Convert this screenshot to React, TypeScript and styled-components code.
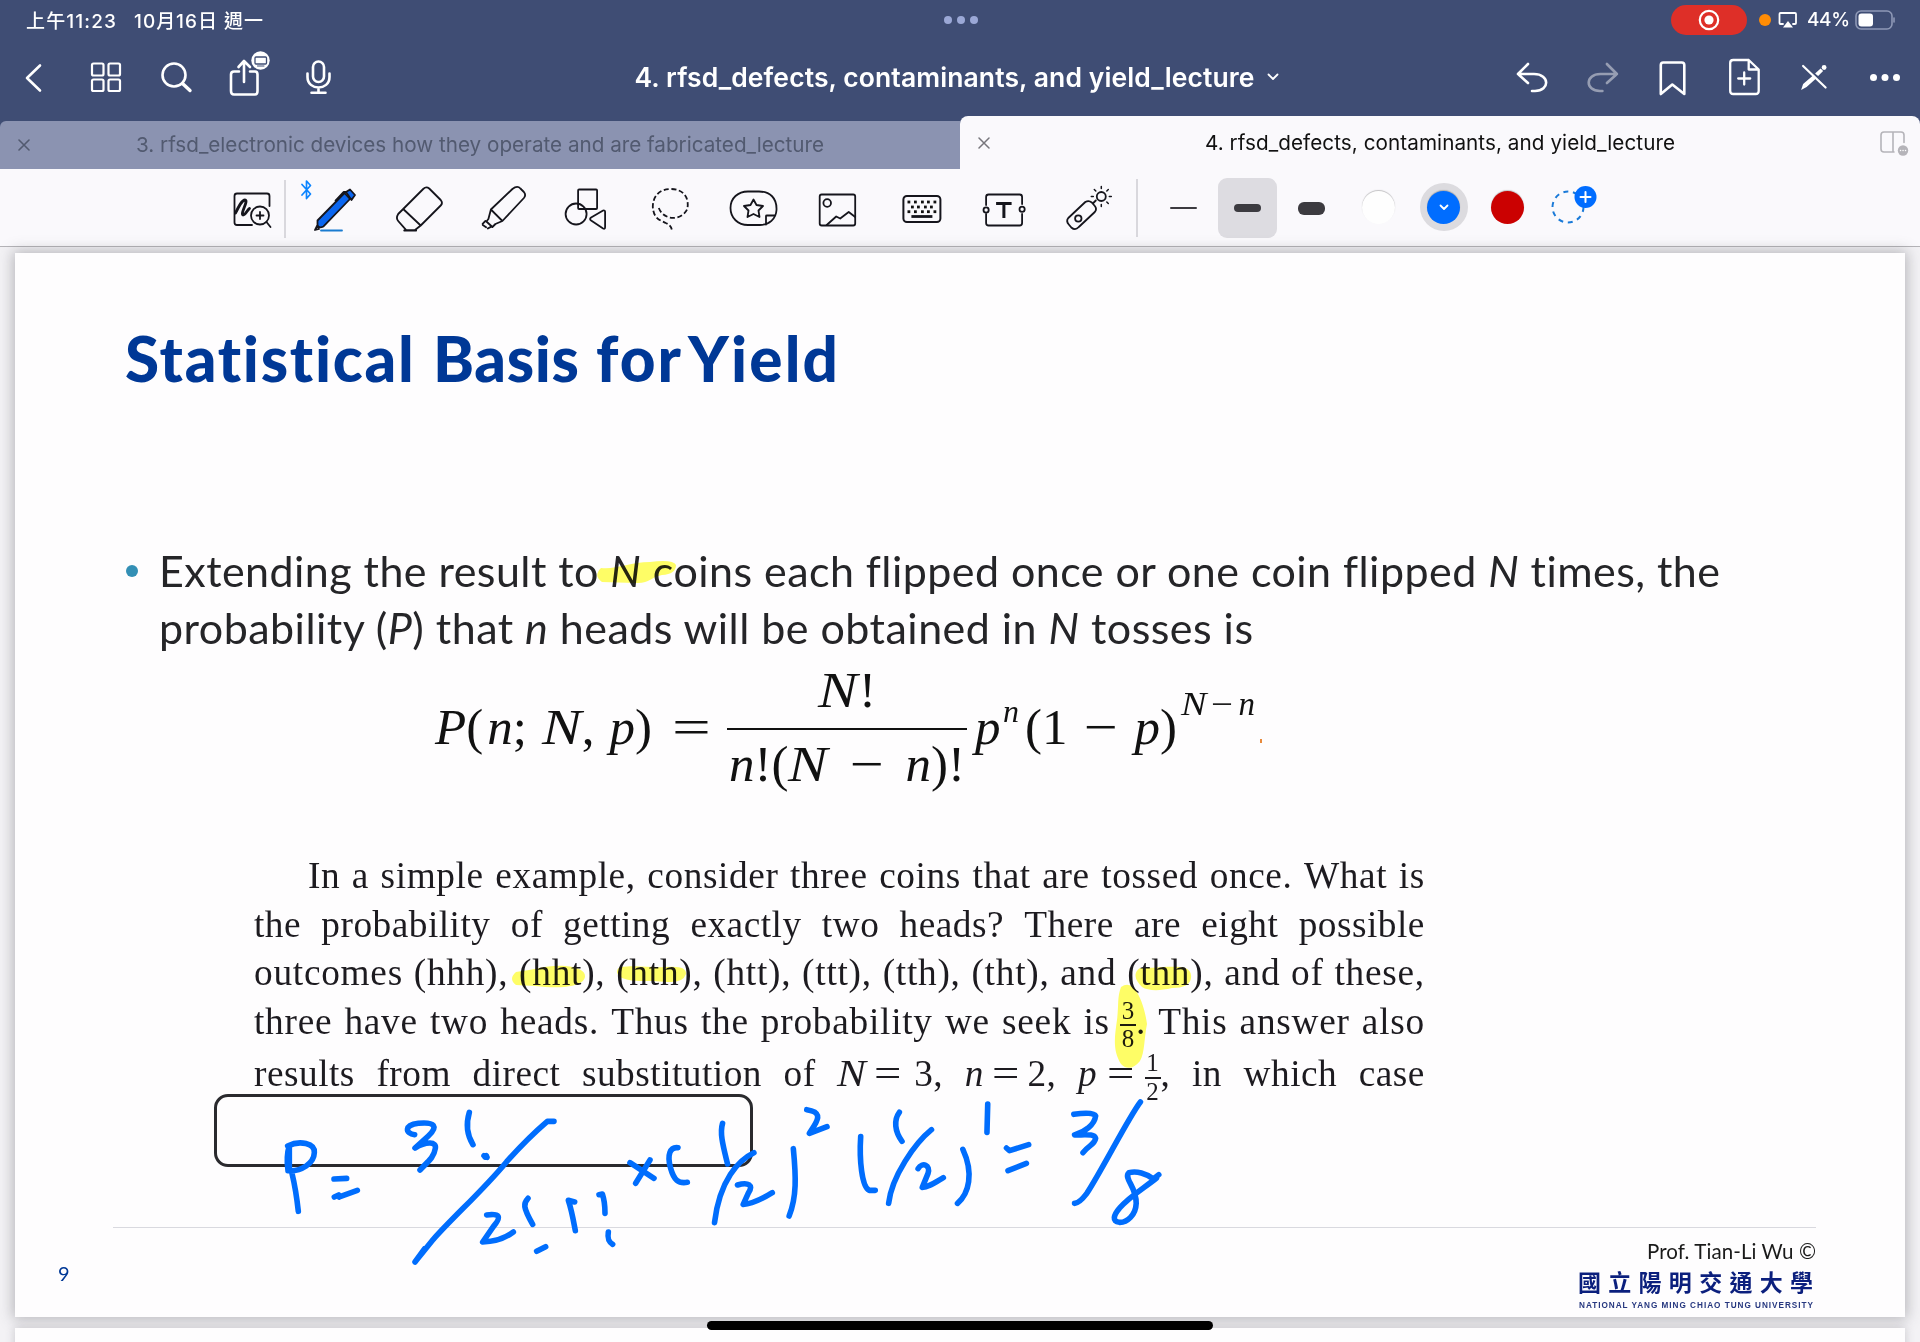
import React, { useLayoutEffect, useRef } from 'react';
import styled, { createGlobalStyle } from 'styled-components';

const ui = `Inter, "Noto Sans CJK TC", sans-serif`;
const gill = `Lato, "Open Sans", sans-serif`;
const book = `"Liberation Serif", serif`;

const Global = createGlobalStyle`
  * { box-sizing: border-box; }
  body { margin: 0; background: #f3f2f5; font-family: ${ui}; overflow: hidden; }
`;

const Screen = styled.div`
  width: 1920px;
  height: 1342px;
  overflow: hidden;
  display: flex;
  flex-direction: column;
  position: relative;
`;

/* One line of text tracked so that it spans a given width. */
const FitSpan = styled.span<{ $w: number }>`
  display: inline-block;
  width: ${p => p.$w}px;
  white-space: nowrap;
`;

function Fit({ w, children }: { w: number; children: React.ReactNode }) {
  const ref = useRef<HTMLSpanElement>(null);
  useLayoutEffect(() => {
    const el = ref.current;
    if (!el) return;
    el.style.letterSpacing = '0px';
    const range = document.createRange();
    range.selectNodeContents(el);
    const natural = range.getBoundingClientRect().width;
    const n = (el.textContent || '').length;
    el.style.letterSpacing = `${(w - natural) / Math.max(1, n - 1)}px`;
  }, [w]);
  return <FitSpan ref={ref} $w={w}>{children}</FitSpan>;
}

/* ---------- header ---------- */
const Header = styled.header`
  flex: none;
  height: 169px;
  background: #3f4d74;
  color: #fff;
  display: flex;
  flex-direction: column;
`;
const StatusBar = styled.div`
  height: 39px;
  display: grid;
  grid-template-columns: 1fr auto 1fr;
  align-items: center;
  padding: 0 25px 0 26px;
  font-size: 19px;
  font-weight: 500;
`;
const StatusLeft = styled.div`
  display: flex;
  gap: 18px;
`;
const StatusRight = styled.div`
  display: flex;
  align-items: center;
  justify-content: flex-end;
`;
const Dots = styled.div`
  display: flex;
  gap: 5px;
  i { width: 8px; height: 8px; border-radius: 50%; background: #9ba8d6; }
`;
const RecordPill = styled.div`
  width: 76px;
  height: 30px;
  border-radius: 15px;
  background: #de2f28;
  display: flex;
  align-items: center;
  justify-content: center;
  margin-right: 12px;
`;
const MicDot = styled.i`
  width: 12px;
  height: 12px;
  border-radius: 50%;
  background: #ff8c05;
  margin-right: 7px;
`;
const BatteryText = styled.span`
  margin: 0 1px 0 9px;
`;
const Nav = styled.div`
  height: 77px;
  display: grid;
  grid-template-columns: 1fr auto 1fr;
  padding: 0 5px 0 4px;
`;
const NavGroup = styled.div<{ $gap: number; $end?: boolean }>`
  display: flex;
  gap: ${p => p.$gap}px;
  justify-content: ${p => (p.$end ? 'flex-end' : 'flex-start')};
`;
const NavTitle = styled.div`
  display: flex;
  align-items: center;
  gap: 12px;
  padding: 0 6px 2px 0;
  font-size: 26.5px;
  font-weight: 600;
`;
const Icon = styled.svg`
  display: block;
  flex: none;
  fill: none;
  stroke: currentColor;
  stroke-width: 2.6;
  stroke-linecap: round;
  stroke-linejoin: round;
`;

const Tabs = styled.div`
  flex: 1;
  display: grid;
  grid-template-columns: 1fr 1fr;
  align-items: end;
`;
const Tab = styled.div<{ $active?: boolean }>`
  height: ${p => (p.$active ? 53 : 48)}px;
  padding: 0 14px 0 18px;
  border-radius: ${p => (p.$active ? '8px 8px 0 0' : '6px 0 0 0')};
  background: ${p => (p.$active ? '#faf9fc' : '#8b93b1')};
  color: ${p => (p.$active ? '#111' : '#525a70')};
  font-size: 20.7px;
  display: grid;
  grid-template-columns: 12px 1fr 26px;
  align-items: center;
`;
const TabLabel = styled.div<{ $shift: number; $up: number }>`
  padding-left: ${p => p.$shift}px;
  padding-bottom: ${p => p.$up}px;
`;

/* ---------- toolbar ---------- */
const Toolbar = styled.div`
  flex: none;
  height: 78px;
  background: #faf9fc;
  border-bottom: 1px solid #b5b4b8;
  display: flex;
  align-items: flex-start;
  padding-left: 210px;
`;
const ToolIcon = styled(Icon)`
  stroke: #15151c;
  stroke-width: 1.8;
`;
const Divider = styled.div<{ $mt: number; $ml?: number; $mr?: number }>`
  flex: none;
  width: 2px;
  height: 58px;
  margin: ${p => p.$mt}px ${p => p.$mr ?? 0}px 0 ${p => p.$ml ?? 0}px;
  background: #d9d8dd;
`;
const StrokeButton = styled.div<{ $on?: boolean; $ml: number }>`
  width: 59px;
  height: 60px;
  margin: 9px 0 0 ${p => p.$ml}px;
  border-radius: 9px;
  background: ${p => (p.$on ? '#dddce1' : 'transparent')};
  display: flex;
  align-items: center;
  justify-content: center;
`;
const StrokeSample = styled.i<{ $h: number }>`
  width: 27px;
  height: ${p => p.$h}px;
  border-radius: 6px;
  background: #3c3b40;
`;
const Swatch = styled.div<{ $c: string; $ring?: boolean; $ml: number }>`
  width: 48px;
  height: 48px;
  border-radius: 50%;
  margin: 14px 0 0 ${p => p.$ml}px;
  background: ${p => (p.$ring ? '#dcdbdf' : 'transparent')};
  display: flex;
  align-items: center;
  justify-content: center;
  > div {
    width: 33px;
    height: 33px;
    border-radius: 50%;
    background: ${p => p.$c};
    box-shadow: 0 -1px 1px rgba(0, 0, 0, 0.22);
    display: flex;
    align-items: center;
    justify-content: center;
  }
`;
const AddColor = styled(Icon)`
  margin-left: 8px;
`;

/* ---------- canvas ---------- */
const Canvas = styled.main`
  flex: 1;
  background: #f3f2f5;
  padding: 6px 15px 0;
  display: flex;
  flex-direction: column;
  gap: 11px;
`;
const Slide = styled.section`
  flex: none;
  height: 1064px;
  background: #fefdfe;
  box-shadow: 0 0 13px 2px rgba(70, 68, 78, 0.35);
  position: relative;
  padding: 70px 89px 0 96px;
  display: flex;
  flex-direction: column;
`;
const NextSlide = styled(Slide)`
  height: 100px;
  box-shadow: 0 0 9px rgba(70, 68, 78, 0.25);
`;
const SlideTitle = styled.h1`
  margin: 0 0 148.5px;
  padding-left: 14px;
  height: 70px;
  font: 900 62px/70px ${gill};
  color: #003896;
  display: flex;
`;
const TitleWord = styled.span<{ $ml: number }>`
  margin-left: ${p => p.$ml}px;
`;
const Bullet = styled.div`
  display: grid;
  grid-template-columns: 33px 1fr;
  padding-left: 15px;
  font: 400 43px/57px ${gill};
  color: #252528;
  &::before {
    content: '';
    width: 12px;
    height: 12px;
    margin-top: 23px;
    border-radius: 50%;
    background: #338fb5;
  }
`;
const BulletLine = styled.div`
  height: 57px;
`;
const Formula = styled.div`
  height: 195px;
  margin-top: 1px;
  padding-left: 324px;
  display: flex;
  align-items: flex-start;
  font: italic 51px/60px ${book};
  color: #111;
`;
const Term = styled.div<{ $w: number; $ml?: number; $mt?: number; $size?: number }>`
  width: ${p => p.$w}px;
  margin: ${p => p.$mt ?? 40}px 0 0 ${p => p.$ml ?? 0}px;
  font-size: ${p => p.$size ?? 51}px;
  line-height: ${p => (p.$size ? '34px' : '60px')};
  display: flex;
  justify-content: space-between;
  flex: none;
  b { font-weight: 400; font-style: normal; }
`;
const Spaced = styled.span<{ $gap: number }>`
  display: inline-flex;
  gap: ${p => p.$gap}px;
`;
const Wide = styled.span<{ $by: number; $extra: number }>`
  display: inline-block;
  font-style: ${p => (p.$by > 1.17 ? 'normal' : 'italic')};
  transform: scaleX(${p => p.$by});
  transform-origin: left;
  margin-right: ${p => p.$extra}px;
`;
const Fraction = styled.div`
  width: 240px;
  margin-left: 17px;
  padding-top: 3px;
  display: flex;
  flex-direction: column;
  align-items: center;
  flex: none;
`;
const FractionBar = styled.div`
  width: 240px;
  height: 2px;
  margin: 8.5px 0 3.5px;
  background: #111;
`;
const Period = styled.i`
  width: 2px;
  height: 4px;
  margin: 82px 0 0 5px;
  background: #e88a3c;
`;

const Passage = styled.div`
  width: 1171px;
  margin-top: 0.5px;
  margin-left: 143px;
  font: 400 37.3px/48.5px ${book};
  color: #1d1b20;
`;
const Line = styled.div<{ $indent?: number; $gap?: number; $track?: number }>`
  display: flex;
  justify-content: space-between;
  height: 48.5px;
  white-space: nowrap;
  letter-spacing: ${p => p.$track ?? 0.5}px;
  padding-left: ${p => p.$indent ?? 0}px;
  margin-top: ${p => p.$gap ?? 0}px;
`;
const Token = styled.span<{ $gap?: number; $pull?: number }>`
  display: inline-flex;
  gap: ${p => p.$gap ?? 0}px;
  margin-left: ${p => -(p.$pull ?? 0)}px;
`;
const SmallFraction = styled.span`
  width: 16px;
  display: inline-flex;
  flex-direction: column;
  align-items: center;
  font-size: 25px;
  line-height: 26.5px;
  letter-spacing: 0;
  span:first-child { border-bottom: 2px solid #1d1b20; width: 16px; text-align: center; }
`;
const AnswerBox = styled.div`
  width: 539px;
  height: 73px;
  margin: -4.5px 0 0 103px;
  border: 3.5px solid #2a2a2e;
  border-radius: 14px;
`;
const Rule = styled.div`
  height: 1px;
  margin-top: 60px;
  margin-left: 2px;
  background: #d9d9df;
  flex: none;
`;
const Footer = styled.footer`
  display: flex;
  justify-content: space-between;
  margin-left: -53px;
  padding-top: 11px;
`;
const PageNumber = styled.div`
  padding-top: 21px;
  font: 400 20px/26px ${gill};
  color: #003896;
`;
const Credit = styled.div`
  display: flex;
  flex-direction: column;
  align-items: flex-end;
  font: 400 20.5px/24px ${gill};
  color: #1a1a1a;
`;
const School = styled.div`
  margin: 4px 3px 0 0;
  font: 700 23px/28px "Noto Sans CJK TC", sans-serif;
  color: #0b1f7d;
`;
const SchoolEn = styled.div`
  margin: 4px 3px 0 0;
  font: 700 8.2px/14px "Liberation Sans", sans-serif;
  color: #26377f;
`;
const Ink = styled.svg`
  position: absolute;
  left: 0;
  top: 0;
  width: 1890px;
  height: 1064px;
  fill: none;
  stroke: #006dfd;
  stroke-width: 5.6;
  stroke-linecap: round;
  stroke-linejoin: round;
  path { vector-effect: non-scaling-stroke; }
`;
const Marker = styled(Ink)`
  mix-blend-mode: multiply;
  fill: #ffff66;
  stroke: none;
`;
const HomeBar = styled.div`
  position: absolute;
  left: 707px;
  top: 1321px;
  width: 506px;
  height: 9px;
  border-radius: 5px;
  background: #000;
`;

const Words = ({ text }: { text: string }) => (
  <>{text.split(' ').map((w, i) => <span key={i}>{w}</span>)}</>
);
const BigN = ({ extra = 6 }: { extra?: number }) => <Wide $by={1.16} $extra={extra}>N</Wide>;
const Minus = ({ extra = 5 }: { extra?: number }) => <Wide $by={1.18} $extra={extra}>−</Wide>;

const NavIcon = ({ x, children, dim }: { x: number; children: React.ReactNode; dim?: boolean }) => (
  <Icon width={60} height={77} viewBox={`${x} 39 60 77`} opacity={dim ? 0.45 : 1}>{children}</Icon>
);
const Tool = ({ x, children }: { x: number; children: React.ReactNode }) => (
  <ToolIcon width={83.8} height={77} viewBox={`${x} 169 83.8 77`}>{children}</ToolIcon>
);

const keyRows = [
  { y: 202, xs: [908.5, 915, 922, 928, 934.5] },
  { y: 207, xs: [912, 918, 925, 931] },
  { y: 211.7, xs: [908.5, 915, 922, 928, 934.5] },
];

export default function App() {
  return (
    <Screen>
      <Global />
      <Header>
        <StatusBar>
          <StatusLeft>
            <Fit w={90}>上午11:23</Fit>
            <Fit w={129}>10月16日 週一</Fit>
          </StatusLeft>
          <Dots><i /><i /><i /></Dots>
          <StatusRight>
            <RecordPill>
              <Icon width={22} height={22} viewBox="0 0 22 22">
                <circle cx="11" cy="11" r="9.2" strokeWidth="2.2" />
                <circle cx="11" cy="11" r="4.6" fill="#fff" stroke="none" />
              </Icon>
            </RecordPill>
            <MicDot />
            <Icon width={20} height={18} viewBox="0 0 20 18">
              <path d="M5 13H2.500Q1.500 13 1.500 12V3Q1.500 2 2.500 2H17Q18 2 18 3V12Q18 13 17 13H15" strokeWidth="1.800" />
              <path d="M10 10L15 16.500H5Z" fill="#fff" stroke="none" />
            </Icon>
            <BatteryText><Fit w={43}>44%</Fit></BatteryText>
            <Icon width={44} height={22} viewBox="0 0 44 22">
              <rect x="5" y="2" width="36" height="18" rx="5" stroke="#8e98b6" strokeWidth="1.600" />
              <rect x="7.500" y="4.500" width="14.500" height="13" rx="3" fill="#fff" stroke="none" />
              <path d="M43 9V13" stroke="#8e98b6" strokeWidth="1.600" />
            </Icon>
          </StatusRight>
        </StatusBar>
        <Nav>
          <NavGroup $gap={11}>
            <NavIcon x={4}><path d="M40 65.500L27 78L40 90.500" /></NavIcon>
            <NavIcon x={75}>
              <rect x="92" y="63.500" width="11.500" height="12" rx="1.500" strokeWidth="2.200" />
              <rect x="108.500" y="63.500" width="11.500" height="12" rx="1.500" strokeWidth="2.200" />
              <rect x="92" y="79.500" width="11.500" height="11.500" rx="1.500" strokeWidth="2.200" />
              <rect x="108.500" y="79.500" width="11.500" height="11.500" rx="1.500" strokeWidth="2.200" />
            </NavIcon>
            <NavIcon x={146}>
              <circle cx="174" cy="75" r="11.500" />
              <path d="M182.500 83.500L190 90.500" strokeWidth="3.400" />
            </NavIcon>
            <NavIcon x={217}>
              <path d="M239 71.500H234Q231 71.500 231 74.500V91Q231 94.500 234 94.500H255Q257.500 94.500 257.500 91V74.500Q257.500 71.500 255 71.500H250" />
              <path d="M244 82V61M238.500 67L244 61L250 67" />
              <circle cx="260.500" cy="60.500" r="9.200" fill="#fff" stroke="none" />
              <rect x="255" y="57" width="11.500" height="7" rx="1" stroke="#3f4d74" strokeWidth="1.300" />
              <path d="M257.500 66H264" stroke="#3f4d74" strokeWidth="1" />
            </NavIcon>
            <NavIcon x={288}>
              <rect x="313" y="61.500" width="11" height="20.500" rx="5.500" />
              <path d="M307.500 73.500V77C307.500 91 329.500 91 329.500 77V73.500M318.500 88V92.500M311.500 92.700H325.500" />
            </NavIcon>
          </NavGroup>
          <NavTitle>
            <Fit w={620}>4. rfsd_defects, contaminants, and yield_lecture</Fit>
            <Icon width={12} height={8} viewBox="0 0 12 8"><path d="M1.500 1.500L6 6L10.500 1.500" strokeWidth="1.800" /></Icon>
          </NavTitle>
          <NavGroup $gap={10.6} $end>
            <NavIcon x={1502}><path d="M1528 64L1518 74L1528 83M1518 74H1534C1550 74 1550 91 1535 91H1532" /></NavIcon>
            <NavIcon x={1572.6} dim><path d="M1606.500 64L1616.500 74L1606.500 83M1616.500 74H1600C1584.500 74 1584.500 91 1599.500 91H1602" /></NavIcon>
            <NavIcon x={1643.2}><path d="M1661 65Q1661 62.500 1663.500 62.500H1682Q1684.500 62.500 1684.500 65V94L1672.500 84.500L1661 94Z" /></NavIcon>
            <NavIcon x={1713.8}>
              <path d="M1748 60H1733Q1730 60 1730 63V91Q1730 94 1733 94H1755.500Q1758.500 94 1758.500 91V69.500L1748.500 60V69.500H1758M1744 72.500V84.500M1738 78.500H1750" strokeWidth="2.300" />
            </NavIcon>
            <NavIcon x={1784.4}>
              <path d="M1803.500 66L1826 87.500" strokeWidth="2.200" />
              <path d="M1801.500 90L1803.500 84L1814 75L1817 78L1807 87ZM1815.500 73.500L1821 68.500L1823.500 71L1818.500 76Z" fill="#fff" stroke="none" />
              <circle cx="1824.500" cy="67.500" r="2.400" fill="#fff" stroke="none" />
            </NavIcon>
            <NavIcon x={1855}>
              {[1873.5, 1885, 1896.5].map(x => <circle key={x} cx={x} cy="77.500" r="3.500" fill="#fff" stroke="none" />)}
            </NavIcon>
          </NavGroup>
        </Nav>
        <Tabs>
          <Tab>
            <Icon width={12} height={12} viewBox="0 0 12 12"><path d="M1 1L11 11M11 1L1 11" strokeWidth="1.600" /></Icon>
            <TabLabel $shift={106} $up={2}><Fit w={688}>3. rfsd_electronic devices how they operate and are fabricated_lecture</Fit></TabLabel>
          </Tab>
          <Tab $active>
            <Icon width={12} height={12} viewBox="0 0 12 12" color="#77767c"><path d="M1 1L11 11M11 1L1 11" strokeWidth="1.500" /></Icon>
            <TabLabel $shift={215} $up={0}><Fit w={470}>4. rfsd_defects, contaminants, and yield_lecture</Fit></TabLabel>
            <Icon width={30} height={26} viewBox="1880 129.500 30 26" color="#b5b4b9">
              <path d="M1894 151.500H1884Q1881 151.500 1881 148.500V134.500Q1881 131.500 1884 131.500H1901Q1904 131.500 1904 134.500V142M1893 131.500V151.500" strokeWidth="1.600" />
              <circle cx="1903" cy="150" r="5.200" fill="#b5b4b9" stroke="none" />
              <path d="M1900.500 150H1900.600M1903 150H1903.100M1905.500 150H1905.600" stroke="#fff" strokeWidth="1.400" />
            </Icon>
          </Tab>
        </Tabs>
      </Header>

      <Toolbar>
        <ToolIcon width={75} height={77} viewBox="210 169 75 77">
          <path d="M269.500 206V196Q269.500 193.500 267 193.500H237Q234.500 193.500 234.500 196V222.500Q234.500 225 237 225H252" />
          <path d="M235.500 213C239 206 242 200 245 200C249 200 240 214 243 215C246 215 247 210 249.500 208.500" strokeWidth="2.800" />
          <circle cx="260" cy="215.500" r="9" /><path d="M256.500 215.500H263.500M260 212V219M266.500 222L270.500 227" />
        </ToolIcon>
        <Divider $mt={11} $ml={-1} $mr={1} />
        <Tool x={287}>
          <path d="M302 184.500L310.500 194L306.500 198.500V181L310.500 185.500L302 195" stroke="#0a84ff" strokeWidth="1.700" />
          <path d="M317.500 220.500L344.500 193L350 199L323.500 226.500Q319 228.500 317.500 225.500Z" fill="#0a66f0" />
          <path d="M346 192L350 189.500L355 195L351.500 200Z" fill="#0a66f0" />
          <path d="M335.500 200.500L343.500 192L346 192M315 230L317 226L319 229Z" />
          <path d="M321 230.500H342" stroke="#1a7cd0" />
        </Tool>
        <Tool x={370.8}>
          <path d="M403 209L423 189Q426 186 429 188.500L440.500 200Q443 203 440.500 205.500L420.500 225.500ZM403 209L398 214Q395.500 218 398 221L406 230.200H414.500L420.500 225.500M404 230.500H416" />
        </Tool>
        <Tool x={454.6}>
          <path d="M490.500 209.500L512 189Q517 185 520 188.500L523.500 192Q526 195 523.500 198L502 221ZM490.500 209.500L488 219L486 221.500L492 227L495 224L502 221" />
          <path d="M485 221L481.500 224.500L487.500 228.500L491 226.500" strokeDasharray="4 2" />
        </Tool>
        <Tool x={538.4}>
          <rect x="578.500" y="189.500" width="19" height="19.500" rx="1" />
          <circle cx="576.500" cy="214" r="10.500" />
          <path d="M591.500 217.500L603.500 210.500Q605.500 210 605.500 212V227Q605.500 229.500 603.500 228.500L591.500 220.500Q589.500 219 591.500 217.500Z" />
        </Tool>
        <Tool x={622.2}>
          <path d="M659 208C664 221 682 221 687.500 209C690 196 682 189 671 189C658 189 653 198 653 207C654 219 660 220 666 223Q671 225 672 229.500" strokeDasharray="5 2.600" strokeLinecap="butt" />
        </Tool>
        <Tool x={706}>
          <path d="M776.500 210C777 198 770 191.500 759 191.500H748C738 191.500 730.500 198 730.500 208C730.500 218 738 225 748 225H760C769 225 776 219 776.500 210ZM766 224.500V216Q766 215.500 767 215.500H775" />
          <path d="M753.500 199.500L756.500 205L763 206L758.500 210.500L759.500 217L753.500 214L747.500 217L748.500 210.500L744 206L750.500 205Z" />
        </Tool>
        <Tool x={789.8}>
          <rect x="819.500" y="194.500" width="35.500" height="31" rx="2" />
          <circle cx="827" cy="203" r="3.800" />
          <path d="M826.500 225L836 216.500L840 218.500L848.500 212L855 217" />
        </Tool>
        <Tool x={873.6}>
          <rect x="903" y="196" width="37" height="26" rx="3.500" strokeWidth="2" />
          {keyRows.map(r => r.xs.map(x => <rect key={x + '-' + r.y} x={x - 1.4} y={r.y - 1.4} width="2.800" height="2.800" fill="#111" stroke="none" />))}
          <path d="M911 216.500H932" strokeWidth="2.800" strokeLinecap="butt" />
        </Tool>
        <Tool x={957.4}>
          <path d="M986.500 205V197Q986.500 194.500 989 194.500H1020Q1022.500 194.500 1022.500 197V204M986.500 214V223Q986.500 225.500 989 225.500H1020Q1022.500 225.500 1022.500 223V214" />
          <circle cx="986.500" cy="210" r="2.600" /><circle cx="1022.500" cy="209.300" r="2.600" />
          <path d="M996.500 203.500H1012M1004.300 203.500V218" strokeWidth="3" strokeLinecap="butt" />
        </Tool>
        <Tool x={1041.2}>
          <path d="M1068.500 218L1085.500 202Q1089 200 1092 202.500L1095 206Q1097.500 209 1095 212L1079 227Q1075.500 231 1071.500 227.500L1069 224.500Q1066 221 1068.500 218ZM1093.500 203L1096 200.500" />
          <circle cx="1078.500" cy="218.500" r="3.200" /><circle cx="1101.500" cy="196.500" r="4.500" />
          <path d="M1101.500 186.500V188.500M1101.500 204.500V206.500M1091.500 196.500H1093.500M1109.500 196.500H1111.500M1094.500 189.500L1096 191M1108.500 189.500L1107 191M1108.500 203.500L1107 202" strokeWidth="1.500" />
        </Tool>
        <Divider $mt={10} $ml={11} />
        <StrokeButton $ml={16}><StrokeSample $h={2} /></StrokeButton>
        <StrokeButton $ml={5} $on><StrokeSample $h={8} /></StrokeButton>
        <StrokeButton $ml={5}><StrokeSample $h={13} /></StrokeButton>
        <Swatch $ml={14} $c="#fefefe"><div /></Swatch>
        <Swatch $ml={17} $c="#006dff" $ring>
          <div><Icon width={10} height={7} viewBox="0 0 10 7" color="#fff"><path d="M1.500 1.500L5 5L8.500 1.500" strokeWidth="1.800" /></Icon></div>
        </Swatch>
        <Swatch $ml={16} $c="#cb0101"><div /></Swatch>
        <AddColor width={60} height={77} viewBox="1540 169 60 77">
          <circle cx="1568" cy="207" r="15.500" stroke="#1a7ad8" strokeWidth="2" strokeDasharray="5 4.700" strokeLinecap="butt" />
          <circle cx="1585.500" cy="197" r="11" fill="#006dff" stroke="none" />
          <path d="M1580.500 197H1590.500M1585.500 192V202" stroke="#fff" strokeWidth="2" />
        </AddColor>
      </Toolbar>

      <Canvas>
        <Slide>
          <SlideTitle>
            <TitleWord $ml={0}><Fit w={291}>Statistical</Fit></TitleWord>
            <TitleWord $ml={17}><Fit w={146}>Basis</Fit></TitleWord>
            <TitleWord $ml={17}><Fit w={85}>for</Fit></TitleWord>
            <TitleWord $ml={7}><Fit w={150}>Yield</Fit></TitleWord>
          </SlideTitle>
          <Bullet>
            <div>
              <BulletLine><Fit w={1562}>Extending the result to <i>N</i> coins each flipped once or one coin flipped <i>N</i> times, the</Fit></BulletLine>
              <BulletLine><Fit w={1094}>probability (<i>P</i>) that <i>n</i> heads will be obtained in <i>N</i> tosses is</Fit></BulletLine>
            </div>
          </Bullet>
          <Formula>
            <Term $w={217}>
              <Spaced $gap={4}><span>P<b>(</b></span><span>n<b>;</b></span></Spaced>
              <span><BigN /><b>,</b></span>
              <span>p<b>)</b></span>
            </Term>
            <Term $w={38} $ml={20}><Wide $by={1.35} $extra={0}>=</Wide></Term>
            <Fraction>
              <Term $w={58} $mt={0}><BigN /><b>!</b></Term>
              <FractionBar />
              <Term $w={236} $mt={0}>
                <span>n<b>!(</b><BigN /></span><Minus /><span>n<b>)!</b></span>
              </Term>
            </Fraction>
            <Term $w={28} $ml={8}><span>p</span></Term>
            <Term $w={17} $mt={37} $size={32}><span>n</span></Term>
            <Term $w={152} $ml={5}><b>(1</b><Minus /><span>p<b>)</b></span></Term>
            <Term $w={74} $ml={4} $mt={30} $size={33}><BigN extra={3} /><Minus extra={3} /><span>n</span></Term>
            <Period />
          </Formula>
          <Passage>
            <Line $indent={54} $track={0.6}><Words text="In a simple example, consider three coins that are tossed once. What is" /></Line>
            <Line><Words text="the probability of getting exactly two heads? There are eight possible" /></Line>
            <Line $track={0.75}><Words text="outcomes (hhh), (hht), (hth), (htt), (ttt), (tth), (tht), and (thh), and of these," /></Line>
            <Line $track={0.75}>
              <Words text="three have two heads. Thus the probability we seek is" />
              <Token $pull={2}><SmallFraction><span>3</span><span>8</span></SmallFraction><span>.</span></Token>
              <Words text="This answer also" />
            </Line>
            <Line $gap={4}>
              <Words text="results from direct substitution of" />
              <Token $gap={3}><BigN extra={8} /><Wide $by={1.3} $extra={16}>=</Wide><span>3,</span></Token>
              <Token $gap={8}><i>n</i><Wide $by={1.3} $extra={6}>=</Wide><span>2,</span></Token>
              <Token $gap={10}><i>p</i><Wide $by={1.3} $extra={6}>=</Wide><Token><SmallFraction><span>1</span><span>2</span></SmallFraction><span>,</span></Token></Token>
              <Words text="in which case" />
            </Line>
          </Passage>
          <AnswerBox />
          <Rule />
          <Footer>
            <PageNumber>9</PageNumber>
            <Credit>
              <Fit w={169}>Prof. Tian-Li Wu ©</Fit>
              <School><Fit w={235}>國立陽明交通大學</Fit></School>
              <SchoolEn><Fit w={234}>NATIONAL YANG MING CHIAO TUNG UNIVERSITY</Fit></SchoolEn>
            </Credit>
          </Footer>
          <Marker viewBox="15 253 1890 1064">
            <path d="M601 568C615 570 630 562 650 562Q673 559 676 565Q676 574 662 575C650 577 650 584 635 583L602 582Q593 576 601 568Z" />
            <path d="M516 972C535 970 545 965 565 966Q586 968 585 977C583 987 560 989 535 986L516 985Q508 979 516 972Z" />
            <path d="M620 967C640 965 650 968 665 967Q687 965 686 974Q683 983 668 982C645 980 635 983 622 978Q613 972 620 967Z" />
            <path d="M1140 968C1155 968 1165 966 1180 967Q1192 968 1191 978Q1190 988 1172 988C1160 991 1148 991 1142 987Q1130 975 1140 968Z" />
            <path d="M1121 987Q1128 982 1134 988C1141 997 1145 1010 1147 1024C1144 1038 1145 1052 1140 1061Q1130 1073 1121 1064C1112 1050 1115 1035 1117 1020C1119 1005 1117 998 1121 987Z" />
          </Marker>
          <Ink viewBox="15 253 1890 1064">
            <g transform="translate(200 1080) scale(0.33333)">
              <path d="M268 196Q258 230 264 272M263 198C300 180 345 190 343 218C342 250 305 275 264 272M268 200V270M276 280Q288 330 295 394" />
              <path d="M402 297L440 295M403 351L416 345L418 351L472 331" />
              <path d="M644 164C615 160 612 135 655 130C705 125 715 140 685 168L645 204C680 183 710 185 706 205C702 230 690 240 660 270L683 246" />
              <path d="M808 97C798 130 798 160 819 194M855 231L859 227M852 227L861 232" />
              <path d="M1062 124L1042 124C1000 160 960 200 920 245C850 330 760 410 700 478L645 546L674 506" />
              <path d="M860 405C900 400 905 410 880 440L848 486C890 485 915 475 940 456" />
              <path d="M984 355C970 370 968 380 998 433M1010 514L1037 500" />
              <path d="M1124 366L1105 361C1115 390 1120 420 1126 452" />
              <path d="M1197 344L1207 342C1215 365 1215 380 1215 400M1225 456C1222 475 1225 485 1238 493" />
              <path d="M1290 248L1362 295M1350 240L1307 310" />
              <path d="M1434 203C1410 200 1400 225 1412 265C1422 300 1435 312 1462 307" />
            </g>
            <g transform="translate(620 1080) scale(0.38265 0.33333)">
              <path d="M268 130C260 160 270 200 281 252M350 218C310 240 260 300 247 428" />
              <path d="M307 315C335 305 350 315 335 340L322 373C345 372 370 358 398 338" />
              <path d="M453 206C460 290 462 350 442 408M488 89C525 95 520 115 507 138L495 160L541 140" />
              <path d="M629 170C625 240 632 320 651 331L667 331M730 97C715 120 718 155 737 184" />
              <path d="M814 149C770 190 710 290 702 370M779 266C790 245 812 255 805 280L790 322C805 322 820 310 845 293" />
              <path d="M896 208C925 280 912 340 882 370M961 72L959 157" />
              <path d="M1010 204L1018 212L1068 194M1014 272L1062 250" />
              <path d="M1186 103C1215 98 1240 98 1243 108C1240 135 1215 155 1188 165C1215 165 1240 160 1243 175C1240 195 1225 195 1210 218" />
              <path d="M1360 66C1330 110 1260 270 1220 340Q1200 370 1188 370" />
              <path d="M1408 284L1394 297C1375 280 1350 272 1330 278C1315 295 1350 320 1349 370C1348 405 1325 428 1305 427C1285 425 1290 405 1305 385C1330 350 1375 320 1402 294" />
            </g>
          </Ink>
        </Slide>
        <NextSlide />
      </Canvas>
      <HomeBar />
    </Screen>
  );
}
